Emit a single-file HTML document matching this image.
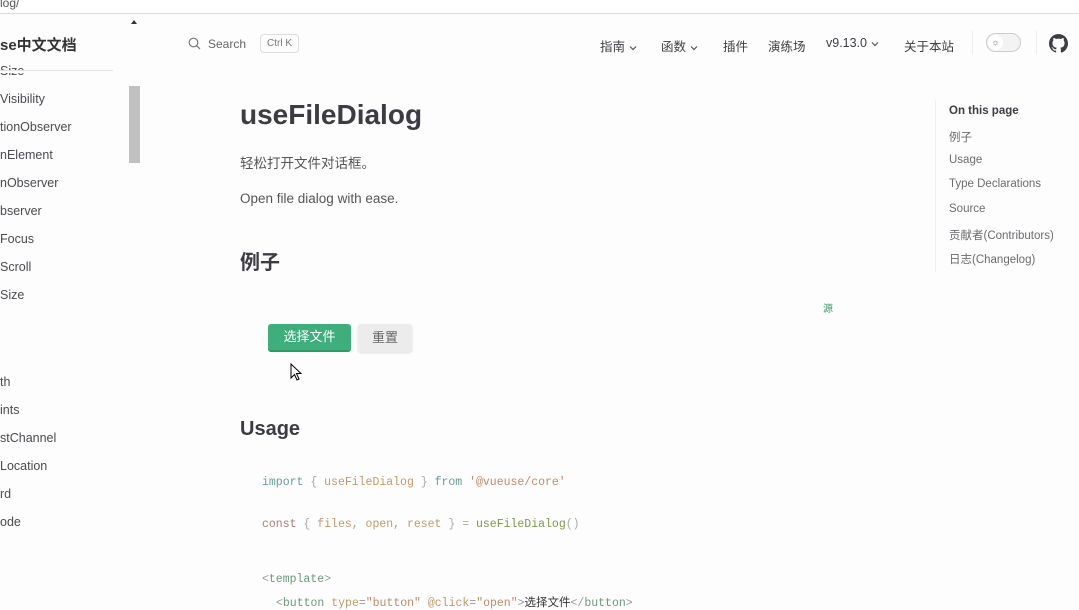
<!DOCTYPE html>
<html><head><meta charset="utf-8"><style>
*{margin:0;padding:0;box-sizing:border-box}
body{width:1079px;height:606px;overflow:hidden;background:#fdfdfd;font-family:"Liberation Sans","Noto Sans CJK SC",sans-serif;color:#3c3c43;position:relative}
.a{position:absolute;white-space:nowrap}
.top{position:absolute;left:0;top:0;width:1079px;height:14px;background:#fff;border-bottom:1px solid #ddd}
.sb{font-size:12.5px;color:#4a4a50}
.nav{font-size:12.5px;color:#3c3c43}
.toc{font-size:11.5px;color:#6b6b70}
.code{font-family:"Liberation Mono","Noto Sans CJK SC",monospace;font-size:11.5px;color:#6a8a6a}
.chev{display:inline-block;vertical-align:middle;margin-left:4px}
</style></head><body>
<div class="top"></div>
<div class="a" style="left:0;top:-4px;font-size:12px;color:#555">log/</div>
<div class="a" style="left:131px;top:20px;width:0;height:0;border-left:3px solid transparent;border-right:3px solid transparent;border-bottom:4px solid #333"></div>
<div class="a" style="left:0;top:34px;font-size:15px;font-weight:bold;color:#333">se中文文档</div>
<div class="a sb" style="left:0;top:64px">Size</div>
<div class="a" style="left:0;top:70px;width:113px;height:3px;border-top:1px solid #e2e2e3;background:#fdfdfd"></div>
<div class="a" style="left:129px;top:86px;width:11px;height:77px;background:#c1c1c1"></div>
<div class="a sb" style="left:0;top:92px">Visibility</div>
<div class="a sb" style="left:0;top:120px">tionObserver</div>
<div class="a sb" style="left:0;top:148px">nElement</div>
<div class="a sb" style="left:0;top:176px">nObserver</div>
<div class="a sb" style="left:0;top:204px">bserver</div>
<div class="a sb" style="left:0;top:232px">Focus</div>
<div class="a sb" style="left:0;top:260px">Scroll</div>
<div class="a sb" style="left:0;top:288px">Size</div>
<div class="a sb" style="left:0;top:375px">th</div>
<div class="a sb" style="left:0;top:403px">ints</div>
<div class="a sb" style="left:0;top:431px">stChannel</div>
<div class="a sb" style="left:0;top:459px">Location</div>
<div class="a sb" style="left:0;top:487px">rd</div>
<div class="a sb" style="left:0;top:515px">ode</div>
<svg class="a" style="left:188px;top:37px" width="13" height="13" viewBox="0 0 13 13"><circle cx="5.5" cy="5.5" r="4.3" fill="none" stroke="#777" stroke-width="1.2"/><path d="M8.7 8.7L12 12" stroke="#777" stroke-width="1.2"/></svg>
<div class="a" style="left:208px;top:37px;font-size:12px;color:#666">Search</div>
<div class="a" style="left:260px;top:34px;width:39px;height:19px;border:1px solid #ddd;border-radius:4px;font-size:10px;color:#777;text-align:center;line-height:17px">Ctrl K</div>
<div class="a nav" style="left:600px;top:36px">指南<svg class="chev" width="8" height="6" viewBox="0 0 8 6"><path d="M1 1.5L4 4.5L7 1.5" fill="none" stroke="#555" stroke-width="1.2"/></svg></div>
<div class="a nav" style="left:661px;top:36px">函数<svg class="chev" width="8" height="6" viewBox="0 0 8 6"><path d="M1 1.5L4 4.5L7 1.5" fill="none" stroke="#555" stroke-width="1.2"/></svg></div>
<div class="a nav" style="left:723px;top:36px">插件</div>
<div class="a nav" style="left:768px;top:36px">演练场</div>
<div class="a nav" style="left:826px;top:36px">v9.13.0<svg class="chev" width="8" height="6" viewBox="0 0 8 6"><path d="M1 1.5L4 4.5L7 1.5" fill="none" stroke="#555" stroke-width="1.2"/></svg></div>
<div class="a nav" style="left:904px;top:36px">关于本站</div>
<div class="a" style="left:972px;top:30px;height:24px;border-left:1px solid #eee"></div>
<div class="a" style="left:986px;top:33px;width:35px;height:19px;border:1px solid #ccc;border-radius:10px;background:#f3f3f3"></div>
<div class="a" style="left:988px;top:35px;width:15px;height:15px;border-radius:50%;background:#fff;font-size:9px;text-align:center;line-height:15px;color:#666">☼</div>
<div class="a" style="left:1036px;top:30px;height:24px;border-left:1px solid #eee"></div>
<svg class="a" style="left:1049px;top:34px" width="19" height="19" viewBox="0 0 16 16"><path fill="#3c3c43" d="M8 0C3.58 0 0 3.58 0 8c0 3.54 2.290 6.530 5.47 7.59.4.07.55-.17.55-.38v-1.33c-2.230.48-2.7-1.07-2.7-1.07-.36-.92-.89-1.170-.89-1.17-.73-.5.06-.49.06-.49.8.06 1.230.83 1.230.83.72 1.220 1.870.87 2.330.67.07-.52.28-.87.5-1.07-1.78-.2-3.65-.89-3.650-3.95 0-.87.31-1.59.82-2.15-.08-.2-.36-1.02.08-2.12 0 0 .67-.21 2.2.82a7.6 7.600 0 014 0c1.530-1.04 2.2-.82 2.2-.82.44 1.1.16 1.92.08 2.12.51.56.82 1.27.82 2.15 0 3.07-1.87 3.750-3.65 3.95.29.25.54.73.54 1.48v2.2c0 .21.15.46.55.38A8 8 0 0016 8c0-4.42-3.58-8-8-8z"/></svg>
<div class="a" style="left:240px;top:99px;font-size:28px;font-weight:bold;color:#3c3c43">useFileDialog</div>
<div class="a" style="left:240px;top:152px;font-size:13.5px;color:#555">轻松打开文件对话框。</div>
<div class="a" style="left:240px;top:191px;font-size:13.5px;color:#555">Open file dialog with ease.</div>
<div class="a" style="left:240px;top:246px;font-size:20px;font-weight:bold;color:#3c3c43">例子</div>
<div class="a" style="left:823px;top:300px;font-size:10px;color:#3a9a6a">源</div>
<div class="a" style="left:268px;top:324px;width:83px;height:28px;background:#3eaf7c;border-radius:3px;border-bottom:2px solid #2d9a68;color:#fff;font-size:13px;text-align:center;line-height:26px">选择文件</div>
<div class="a" style="left:358px;top:324px;width:54px;height:28px;background:#ececec;border-radius:3px;color:#666;font-size:13px;text-align:center;line-height:27px;box-shadow:0 1px 2px #ddd">重置</div>
<svg class="a" style="left:290px;top:363px" width="12" height="19" viewBox="0 0 12 19"><path d="M1 1L1 15L4.5 11.5L7 17L9 16L6.5 10.5L11 10.5Z" fill="#fff" stroke="#000" stroke-width="1"/></svg>
<div class="a" style="left:240px;top:418px;font-size:20px;font-weight:bold;color:#3c3c43">Usage</div>
<div class="a code" style="left:262px;top:476px"><span style="color:#6a9a9a">import</span> <span style="color:#aaa">{</span> <span style="color:#c09a6a">useFileDialog</span> <span style="color:#aaa">}</span> <span style="color:#6a9a9a">from</span> <span style="color:#c08a6a">'@vueuse/core'</span></div>
<div class="a code" style="left:262px;top:518px"><span style="color:#b07a7a">const</span> <span style="color:#aaa">{</span> <span style="color:#c09a6a">files, open, reset</span> <span style="color:#aaa">}</span> <span style="color:#aaa">=</span> <span style="color:#7a9a4a">useFileDialog</span><span style="color:#aaa">()</span></div>
<div class="a code" style="left:262px;top:573px;color:#999">&lt;<span style="color:#6a9a7a">template</span>&gt;</div>
<div class="a code" style="left:276px;top:594px;color:#999">&lt;<span style="color:#6a9a7a">button</span> <span style="color:#c09a6a">type</span>=<span style="color:#c08a6a">"button"</span> <span style="color:#c09a6a">@click</span>=<span style="color:#c08a6a">"open"</span>&gt;<span style="color:#333">选择文件</span>&lt;/<span style="color:#6a9a7a">button</span>&gt;</div>
<div class="a" style="left:935px;top:100px;height:172px;border-left:1px solid #eee"></div>
<div class="a toc" style="left:949px;top:105px;font-weight:bold;color:#3c3c43">On this page</div>
<div class="a toc" style="left:949px;top:129px">例子</div>
<div class="a toc" style="left:949px;top:154px">Usage</div>
<div class="a toc" style="left:949px;top:178px">Type Declarations</div>
<div class="a toc" style="left:949px;top:203px">Source</div>
<div class="a toc" style="left:949px;top:227px">贡献者(Contributors)</div>
<div class="a toc" style="left:949px;top:251px">日志(Changelog)</div>
</body></html>
